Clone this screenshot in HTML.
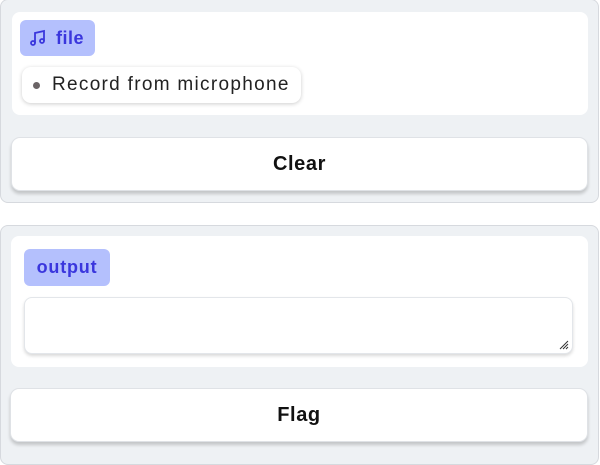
<!DOCTYPE html>
<html><head><style>
*{box-sizing:border-box;margin:0;padding:0}
body{width:600px;height:454px;background:#fff;font-family:"Liberation Sans",sans-serif;position:relative;overflow:hidden}
.panel{position:absolute;background:#eef1f4;border:1px solid #d6d9de;border-radius:8px}
.inner{position:absolute;background:#fff;border-radius:8px}
.badge{position:absolute;background:#b4c0fd;border-radius:6px;color:#3a36dd;font-weight:bold;font-size:17px;display:flex;align-items:center}
.btn{position:absolute;background:#fff;border:1px solid #dfe2e6;border-radius:9px;box-shadow:0 3px 3px rgba(0,0,0,0.18);font-weight:bold;font-size:20px;letter-spacing:0.6px;color:#111;display:flex;align-items:center;justify-content:center}
</style></head><body>
<div class="panel" style="left:0;top:-1px;width:599px;height:204px"></div>
<div class="inner" style="left:12px;top:12px;width:576px;height:103px"></div>
<div class="badge" style="left:20px;top:20px;width:75px;height:36px;padding-left:9px">
<svg width="18" height="18" viewBox="0 0 18 18" fill="none" stroke="#3a36dd" stroke-width="1.8"><path d="M6 14V4l9-2v10"/><circle cx="4" cy="14" r="2"/><circle cx="13" cy="12" r="2"/></svg>
<span style="margin-left:9px;font-size:18px;letter-spacing:0.5px">file</span></div>
<div style="position:absolute;left:22px;top:67px;width:279px;height:36px;background:#fff;border-radius:9px;box-shadow:0 1px 4px rgba(0,0,0,0.2);display:flex;align-items:center;font-size:19px;letter-spacing:1.3px;color:#222;white-space:nowrap">
<span style="width:7px;height:7px;border-radius:50%;background:#6b6466;margin-left:11px;margin-right:12px;flex:none"></span>Record from microphone</div>
<div class="btn" style="left:11px;top:137px;width:577px;height:54px">Clear</div>

<div class="panel" style="left:0;top:225px;width:599px;height:240px"></div>
<div class="inner" style="left:11px;top:236px;width:577px;height:131px"></div>
<div class="badge" style="left:24px;top:249px;width:86px;height:37px;justify-content:center;font-size:18px;letter-spacing:0.8px">output</div>
<div style="position:absolute;left:24px;top:297px;width:549px;height:57px;background:#fff;border:1px solid #e3e6ea;border-radius:8px;box-shadow:0 2px 3px rgba(0,0,0,0.15)">
<svg style="position:absolute;right:3px;bottom:3px" width="10" height="10" viewBox="0 0 10 10" stroke="#333" stroke-width="1"><path d="M9 1L1 9M9 4L4 9M9 7L7 9"/></svg></div>
<div class="btn" style="left:10px;top:388px;width:578px;height:54px">Flag</div>
</body></html>
